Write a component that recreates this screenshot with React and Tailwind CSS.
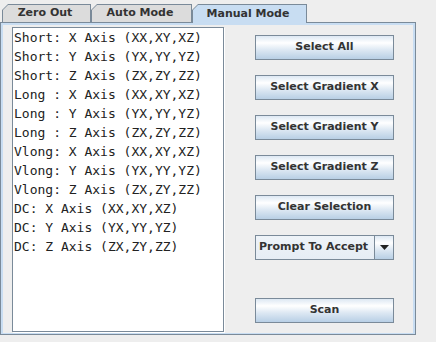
import React from 'react';

const items = [
    'Short: X Axis (XX,XY,XZ)',
    'Short: Y Axis (YX,YY,YZ)',
    'Short: Z Axis (ZX,ZY,ZZ)',
    'Long : X Axis (XX,XY,XZ)',
    'Long : Y Axis (YX,YY,YZ)',
    'Long : Z Axis (ZX,ZY,ZZ)',
    'Vlong: X Axis (XX,XY,XZ)',
    'Vlong: Y Axis (YX,YY,YZ)',
    'Vlong: Z Axis (ZX,ZY,ZZ)',
    'DC: X Axis (XX,XY,XZ)',
    'DC: Y Axis (YX,YY,YZ)',
    'DC: Z Axis (ZX,ZY,ZZ)',
];

const buttons = ['Select All', 'Select Gradient X', 'Select Gradient Y', 'Select Gradient Z', 'Clear Selection'];

const Tab = ({ label, className, selected }) => (
    <div
        className={`${className} ${selected ? 'h-[19px] -mb-[1px] relative z-10' : 'h-[18px]'} bg-[#7a8a99] pt-[1px] px-[1px] [clip-path:polygon(0_6px,6px_0,100%_0,100%_100%,0_100%)]`}
    >
        <div
            className={`h-full flex items-center justify-center pr-[3px] ${selected ? 'bg-[#c8ddf2]' : 'bg-[#dcdcdc]'} [clip-path:polygon(0_5px,5px_0,100%_0,100%_100%,0_100%)] font-bold text-[11px] text-[#333333]`}
        >
            {label}
        </div>
    </div>
);

const MetalButton = ({ children }) => (
    <div className="h-[25px] w-[139px] flex items-center justify-center border border-[#7a8a99] bg-[linear-gradient(to_bottom,#dde8f3_0%,#ffffff_30%,#dde8f3_60%,#b8cfe5_100%)] font-bold text-[11px] text-[#333333]">
        {children}
    </div>
);

export default function App() {
    return (
        <div className="w-[436px] h-[342px] bg-[#eeeeee] overflow-hidden font-['DejaVu_Sans',sans-serif]">
            {/* Tabs */}
            <div className="flex items-end h-[22px] pl-[2px]">
                <Tab label="Zero Out" className="w-[89px]" />
                <Tab label="Auto Mode" className="w-[101px]" />
                <Tab label="Manual Mode" className="w-[115px]" selected />
            </div>

            {/* Content panel */}
            <div className="w-[416px] h-[313px] border border-[#7a8a99]">
                <div className="h-full flex border-[#c8ddf2] border-t-2 border-x-2 border-b">
                    <div className="ml-[9px] mt-[2px] w-[212px] h-[305px] bg-white border border-[#7a8a99] shadow-[1px_1px_0_#ffffff] pl-[1px] font-['DejaVu_Sans_Mono',monospace] text-[13px] leading-[19px] text-[#222222]">
                        {items.map((item) => (
                            <div key={item} className="whitespace-pre">{item}</div>
                        ))}
                    </div>

                    <div className="ml-[31px] pt-[10px] flex flex-col gap-[15px]">
                        {buttons.map((b) => (
                            <MetalButton key={b}>{b}</MetalButton>
                        ))}
                        <div className="h-[25px] w-[139px] flex border border-[#7a8a99] font-bold text-[11px] text-[#333333]">
                            <div className="flex-1 flex items-center pl-[3px] bg-[linear-gradient(to_bottom,#eef3f8,#e6edf5)]">
                                Prompt To Accept
                            </div>
                            <div className="w-[19px] flex items-center justify-center border-l border-[#7a8a99] bg-[linear-gradient(to_bottom,#dde8f3_0%,#ffffff_30%,#dde8f3_60%,#b8cfe5_100%)]">
                                <svg width="9" height="5" viewBox="0 0 9 5">
                                    <polygon points="0,0 9,0 4.5,5" fill="#222222" />
                                </svg>
                            </div>
                        </div>
                        <div className="mt-[23px]">
                            <MetalButton>Scan</MetalButton>
                        </div>
                    </div>
                </div>
            </div>
        </div>
    );
}
